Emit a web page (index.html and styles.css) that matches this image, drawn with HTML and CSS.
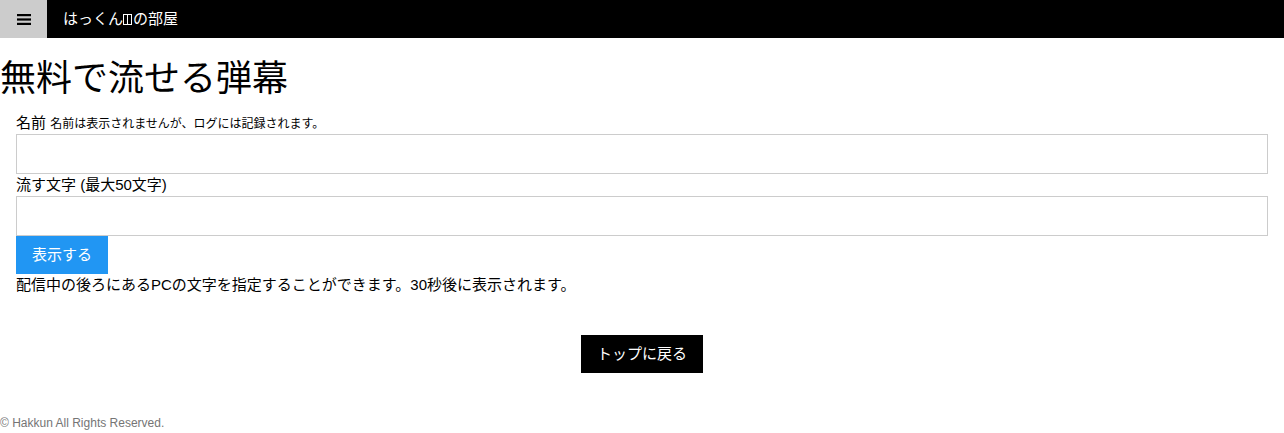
FILE: index.html
```html
<!DOCTYPE html>
<html lang="ja">
<head>
<meta charset="utf-8">
<title>無料で流せる弾幕</title>
<link rel="stylesheet" href="styles.css">
</head>
<body>
<header class="topbar">
  <button class="menu-btn" type="button" aria-label="menu">
    <svg width="14" height="11" viewBox="0 0 14 11"><rect x="0" y="0" width="14" height="2.2" fill="#000"/><rect x="0" y="4.4" width="14" height="2.2" fill="#000"/><rect x="0" y="8.8" width="14" height="2.2" fill="#000"/></svg>
  </button>
  <span class="site-title">はっくん<span class="tofu"></span><span class="tofu"></span>の部屋</span>
</header>
<h1 class="page-title">無料で流せる弾幕</h1>
<form class="form-box">
  <label class="lbl">名前 <small class="note">名前は表示されませんが、ログには記録されます。</small></label>
  <input class="field" type="text">
  <label class="lbl">流す文字 (最大50文字)</label>
  <input class="field" type="text">
  <div class="btn-row"><button class="btn-blue" type="button">表示する</button></div>
  <p class="desc">配信中の後ろにあるPCの文字を指定することができます。30秒後に表示されます。</p>
</form>
<div class="center-row"><a class="btn-black">トップに戻る</a></div>
<footer class="foot">© Hakkun All Rights Reserved.</footer>
</body>
</html>
```
FILE: styles.css
```css
html, body {
  margin: 0;
  padding: 0;
  background: #fff;
  color: #000;
  font-family: "Liberation Sans", "Noto Sans CJK JP", sans-serif;
  font-size: 15px;
  line-height: 1.5;
}
.topbar {
  display: flex;
  align-items: center;
  height: 38px;
  background: #000;
  color: #fff;
}
.menu-btn {
  width: 47px;
  height: 38px;
  border: 0;
  padding: 0;
  background: #ccc;
  display: flex;
  align-items: center;
  justify-content: center;
}
.menu-btn svg { display: block; margin-left: 1px; }
.site-title {
  margin-left: 16px;
  font-size: 15px;
  display: flex;
  align-items: center;
}
.tofu {
  display: inline-block;
  width: 3px;
  height: 9px;
  border: 1px solid #fff;
}
.tofu + .tofu { border-left: 0; margin-right: 1px; }
.page-title {
  font-size: 36px;
  font-weight: 400;
  margin: 10px 0;
  line-height: 54px;
  font-family: "Noto Sans CJK JP", sans-serif;
}
.form-box {
  padding: 0 16px;
  margin: 0;
  display: flex;
  flex-direction: column;
}
.lbl {
  display: block;
  height: 22px;
  line-height: 22px;
}
.note { font-size: 12px; }
.field {
  display: block;
  box-sizing: border-box;
  width: 100%;
  height: 40px;
  border: 1px solid #ccc;
  padding: 8px;
  margin: 0;
  font: inherit;
}
.btn-row { display: flex; }
.btn-blue {
  background: #2196f3;
  color: #fff;
  border: 0;
  height: 38px;
  padding: 0 16px;
  font: inherit;
}
.desc {
  margin: 0;
  height: 22px;
  line-height: 22px;
}
.center-row {
  display: flex;
  justify-content: center;
  margin-top: 39px;
}
.btn-black {
  background: #000;
  color: #fff;
  height: 38px;
  line-height: 38px;
  padding: 0 16px;
}
.foot {
  margin-top: 41px;
  font-size: 12px;
  line-height: 18px;
  color: #757575;
}
```
